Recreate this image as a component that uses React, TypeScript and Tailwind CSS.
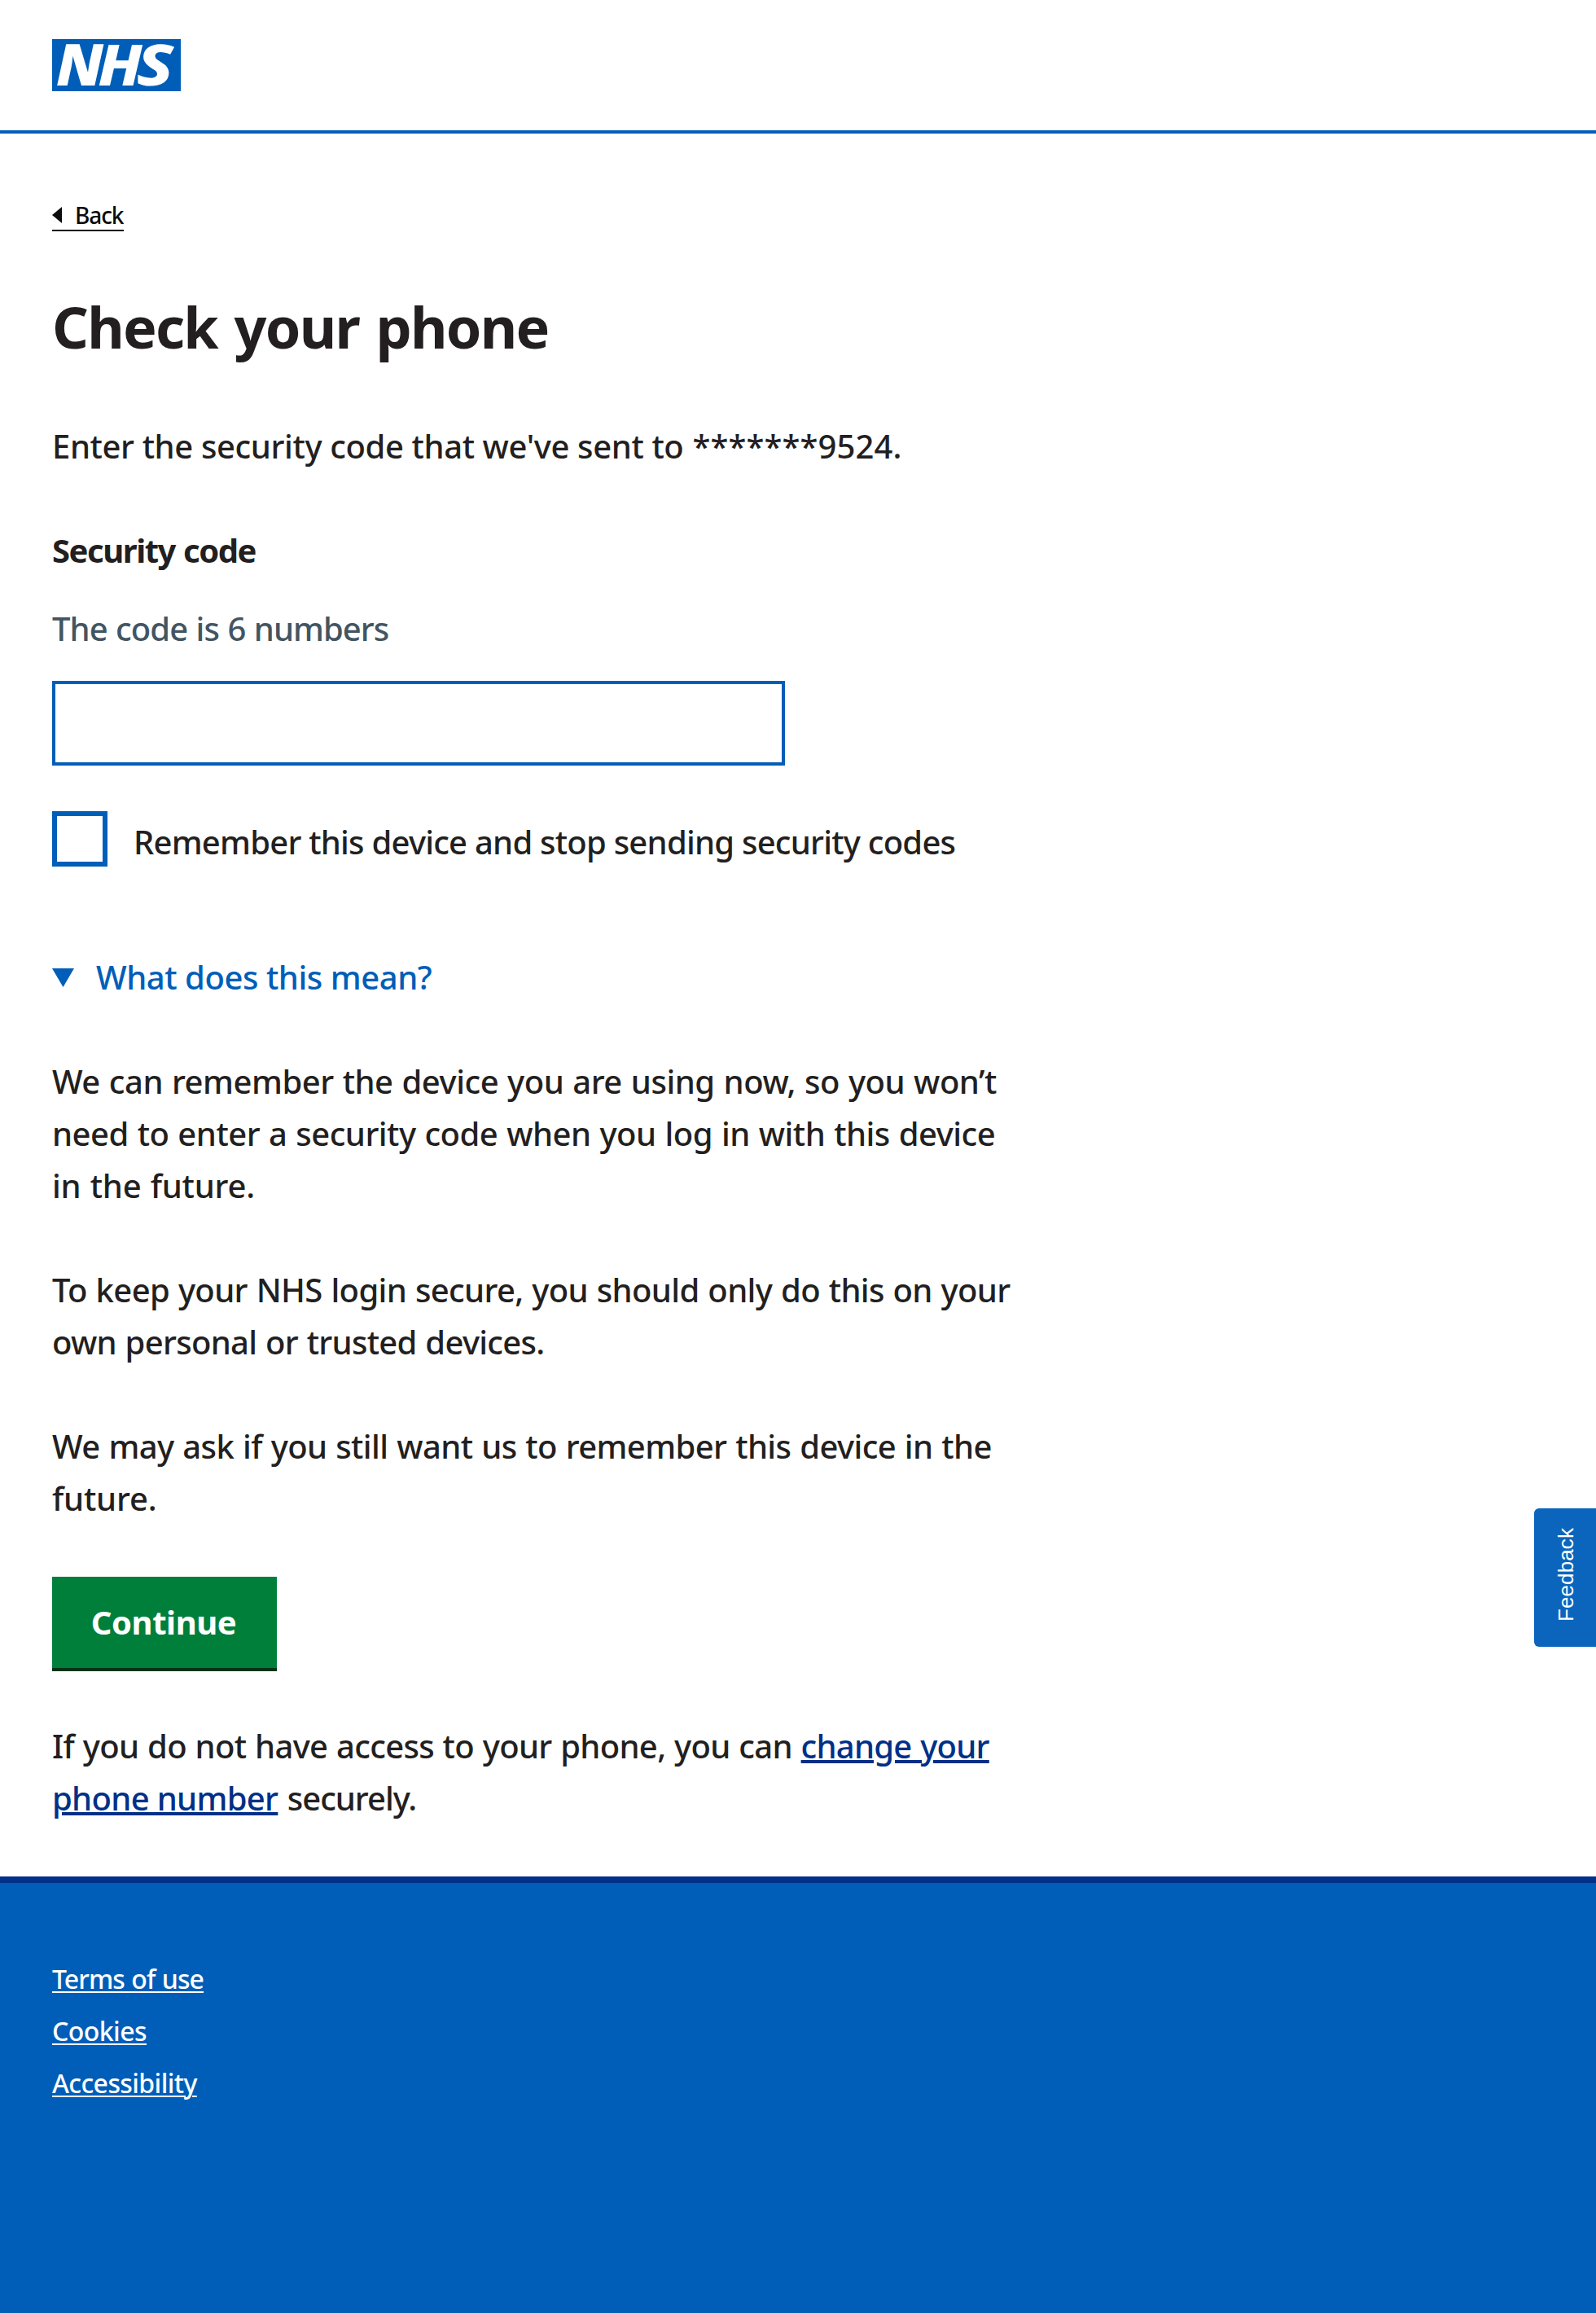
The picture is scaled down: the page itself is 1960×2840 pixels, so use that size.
import React from "react";

type TextLine = { text: string; tracking: string };

const paragraphs: TextLine[][] = [
  [
    { text: "We can remember the device you are using now, so you won’t", tracking: "tracking-[-0.465px]" },
    { text: "need to enter a security code when you log in with this device", tracking: "tracking-[-0.5px]" },
    { text: "in the future.", tracking: "tracking-[-0.2px]" },
  ],
  [
    { text: "To keep your NHS login secure, you should only do this on your", tracking: "tracking-[-0.64px]" },
    { text: "own personal or trusted devices.", tracking: "tracking-[-0.7px]" },
  ],
  [
    { text: "We may ask if you still want us to remember this device in the", tracking: "tracking-[-0.6px]" },
    { text: "future.", tracking: "tracking-[-0.2px]" },
  ],
];

const footerLinks: TextLine[] = [
  { text: "Terms of use", tracking: "tracking-[-0.92px]" },
  { text: "Cookies", tracking: "tracking-[-0.56px]" },
  { text: "Accessibility", tracking: "tracking-[-0.59px]" },
];

function Logo() {
  return (
    <svg width="158" height="64" viewBox="0 0 158 64" role="img" aria-label="NHS" className="block overflow-visible">
      <rect width="158" height="64" fill="#005eb8" />
      <g fill="#fff" fontFamily='"Noto Sans", sans-serif' fontStyle="italic" fontWeight="800" fontSize="70">
        <text x="5" y="57" fontWeight="900" textLength="58" lengthAdjust="spacingAndGlyphs">N</text>
        <text x="56.2" y="57" textLength="54.5" lengthAdjust="spacingAndGlyphs">H</text>
        <text x="103.8" y="57" textLength="45.4" lengthAdjust="spacingAndGlyphs">S</text>
      </g>
    </svg>
  );
}

function Header() {
  return (
    <header className="h-[164px] border-b-4 border-[#005eb8] px-16 pt-12">
      <Logo />
    </header>
  );
}

function BackLink() {
  return (
    <a
      href="#"
      className="flex h-[39px] w-[88px] items-start gap-4 border-b-2 border-[#0b0c0c] text-[28px] leading-[38px] font-medium tracking-[-1.1px] text-[#0b0c0c]"
    >
      <svg width="12" height="20" viewBox="0 0 12 20" className="mt-[9px] shrink-0">
        <path d="M12 0v20L0 10z" fill="currentColor" />
      </svg>
      Back
    </a>
  );
}

function Footer() {
  return (
    <footer className="h-[536px] border-t-8 border-[#003087] bg-[#005eb8] px-16 pt-[86px] text-[32px] leading-[64px] font-medium text-white">
      <ul>
        {footerLinks.map((l) => (
          <li key={l.text} className="h-16">
            <a href="#" className={`${l.tracking} [word-spacing:1px] underline decoration-2 underline-offset-[3px]`}>
              {l.text}
            </a>
          </li>
        ))}
      </ul>
    </footer>
  );
}

export default function App() {
  return (
    <div className="relative h-[2840px] w-[1960px] overflow-hidden bg-white font-['Noto_Sans',sans-serif] text-[40px] leading-[64px] font-medium whitespace-nowrap text-[#231f20]">
      <Header />
      <main className="flex h-[2140px] flex-col items-start px-16 pt-[81px]">
        <BackLink />
        <h1 className="mt-[77px] text-[70px] leading-[80px] font-bold tracking-[-1.75px] [word-spacing:4px]">
          Check your phone
        </h1>
        <p className="mt-[75px] tracking-[-0.38px]">
          Enter the security code that we've sent to <span className="ml-px tracking-[0.1px]">*******9524.</span>
        </p>
        <label htmlFor="code" className="mt-16 font-bold tracking-[-1.45px] [word-spacing:1px]">
          Security code
        </label>
        <p className="mt-8 tracking-[-0.95px] [word-spacing:1px] text-[#425563]">The code is 6 numbers</p>
        <input id="code" className="mt-8 h-[104px] w-[900px] border-4 border-[#005eb8] bg-white" />
        <label className="mt-14 flex h-[68px] items-start">
          <span className="size-[68px] border-[6px] border-[#005eb8]" />
          <span className="mt-1.5 ml-8 tracking-[-0.76px]">Remember this device and stop sending security codes</span>
        </label>
        <div className="mt-[104px] flex items-start text-[#005eb8]">
          <svg width="27" height="23" viewBox="0 0 27 23" className="mt-[21px]">
            <path d="M0 0h27L13.5 23z" fill="currentColor" />
          </svg>
          <span className="ml-[27px] tracking-[-0.44px]">What does this mean?</span>
        </div>
        {paragraphs.map((lines, i) => (
          <p key={i} className="mt-16">
            {lines.map((l) => (
              <span key={l.text} className={`block [word-spacing:1px] ${l.tracking}`}>
                {l.text}
              </span>
            ))}
          </p>
        ))}
        <button className="mt-16 h-[116px] w-[276px] border-b-4 border-[#003317] bg-[#007f3b] pr-0.5 text-center font-bold tracking-[-0.4px] text-white">
          Continue
        </button>
        <p className="mt-[60px]">
          <span className="block tracking-[-0.69px] [word-spacing:1px]">
            If you do not have access to your phone, you can{" "}
            <a href="#" className="tracking-[-0.75px] text-[#003087] underline decoration-4 underline-offset-[2px]">
              change your
            </a>
          </span>
          <span className="block tracking-[-1px]">
            <a href="#" className="mr-0.5 tracking-[-0.68px] text-[#003087] underline decoration-4 underline-offset-[2px]">
              phone number
            </a>{" "}
            securely.
          </span>
        </p>
      </main>
      <Footer />
      <button className="absolute top-[1852px] right-0 flex h-[170px] w-[76px] items-center justify-center rounded-l-md bg-[#0b65bd] pb-2 pl-px font-['Liberation_Sans',sans-serif] text-[26px] leading-none font-normal text-white">
        <span className="rotate-180 tracking-[0.1px] [writing-mode:vertical-rl]">Feedback</span>
      </button>
    </div>
  );
}
